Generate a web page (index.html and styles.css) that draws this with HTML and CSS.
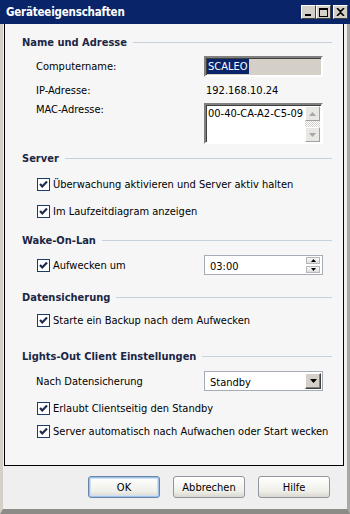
FILE: index.html
```html
<!DOCTYPE html>
<html lang="de">
<head>
    <meta charset="UTF-8">
    <meta name="viewport" content="width=device-width, initial-scale=1.0">
    <title>Geräteeigenschaften</title>
    <link rel="stylesheet" href="styles.css">
</head>
<body>
    <div class="window">
        <div class="titlebar">
            <span class="title">Geräteeigenschaften</span>
            <div class="caption-buttons">
                <span class="cap-btn"><svg width="9" height="9" viewBox="0 0 9 9"><rect x="1" y="6" width="6" height="2" fill="#000"/></svg></span>
                <span class="cap-btn"><svg width="9" height="9" viewBox="0 0 9 9"><rect x="0.5" y="0.5" width="8" height="8" fill="none" stroke="#000"/><rect x="0" y="0" width="9" height="2" fill="#000"/></svg></span>
                <span class="cap-btn close"><svg width="9" height="8" viewBox="0 0 9 8"><path d="M1 0 L4.5 3.5 L8 0 M1 8 L4.5 4.5 L8 8" stroke="#000" stroke-width="1.6" fill="none"/></svg></span>
            </div>
        </div>

        <div class="content">
            <div class="panel">
                <div class="heading h-first"><span>Name und Adresse</span></div>
                <div class="row r-name">
                    <span class="label">Computername:</span>
                    <div class="field readonly"><span class="selected">SCALEO</span></div>
                </div>
                <div class="row r-ip">
                    <span class="label">IP-Adresse:</span>
                    <span class="value">192.168.10.24</span>
                </div>
                <div class="row r-mac">
                    <span class="label">MAC-Adresse:</span>
                    <div class="field memo">
                        <span class="memo-text">00-40-CA-A2-C5-09</span>
                        <div class="scrollbar">
                            <span class="sb-btn"><svg width="7" height="4" viewBox="0 0 7 4"><path d="M0 4 L3.5 0 L7 4 Z" fill="#a7a6aa"/></svg></span>
                            <span class="sb-track"></span>
                            <span class="sb-btn"><svg width="7" height="4" viewBox="0 0 7 4"><path d="M0 0 L3.5 4 L7 0 Z" fill="#a7a6aa"/></svg></span>
                        </div>
                    </div>
                </div>

                <div class="heading h-server"><span>Server</span></div>
                <label class="check c-1"><span class="box"><svg width="13" height="13" viewBox="0 0 13 13"><rect x="0.5" y="0.5" width="12" height="12" fill="#fff" stroke="#1c3b68"/><path d="M3 6 L5.3 8.5 L10 3.5" stroke="#1d2b4f" stroke-width="2.2" fill="none"/></svg></span>Überwachung aktivieren und Server aktiv halten</label>
                <label class="check c-2"><span class="box"><svg width="13" height="13" viewBox="0 0 13 13"><rect x="0.5" y="0.5" width="12" height="12" fill="#fff" stroke="#1c3b68"/><path d="M3 6 L5.3 8.5 L10 3.5" stroke="#1d2b4f" stroke-width="2.2" fill="none"/></svg></span>Im Laufzeitdiagram anzeigen</label>

                <div class="heading h-wake"><span>Wake-On-Lan</span></div>
                <div class="row r-wake">
                    <label class="check label-check"><span class="box"><svg width="13" height="13" viewBox="0 0 13 13"><rect x="0.5" y="0.5" width="12" height="12" fill="#fff" stroke="#1c3b68"/><path d="M3 6 L5.3 8.5 L10 3.5" stroke="#1d2b4f" stroke-width="2.2" fill="none"/></svg></span>Aufwecken um</label>
                    <div class="field flat spin">
                        <span class="field-text">03:00</span>
                        <div class="spin-buttons">
                            <span class="spin-btn"><svg width="5" height="3" viewBox="0 0 5 3"><path d="M0 3 L2.5 0 L5 3 Z" fill="#000"/></svg></span>
                            <span class="spin-btn"><svg width="5" height="3" viewBox="0 0 5 3"><path d="M0 0 L2.5 3 L5 0 Z" fill="#000"/></svg></span>
                        </div>
                    </div>
                </div>

                <div class="heading h-backup"><span>Datensicherung</span></div>
                <label class="check c-backup"><span class="box"><svg width="13" height="13" viewBox="0 0 13 13"><rect x="0.5" y="0.5" width="12" height="12" fill="#fff" stroke="#1c3b68"/><path d="M3 6 L5.3 8.5 L10 3.5" stroke="#1d2b4f" stroke-width="2.2" fill="none"/></svg></span>Starte ein Backup nach dem Aufwecken</label>

                <div class="heading h-lights"><span>Lights-Out Client Einstellungen</span></div>
                <div class="row r-after">
                    <span class="label">Nach Datensicherung</span>
                    <div class="field flat combo">
                        <span class="field-text">Standby</span>
                        <span class="combo-btn"><svg width="7" height="4" viewBox="0 0 7 4"><path d="M0 0 L3.5 4 L7 0 Z" fill="#000"/></svg></span>
                    </div>
                </div>
                <label class="check c-standby"><span class="box"><svg width="13" height="13" viewBox="0 0 13 13"><rect x="0.5" y="0.5" width="12" height="12" fill="#fff" stroke="#1c3b68"/><path d="M3 6 L5.3 8.5 L10 3.5" stroke="#1d2b4f" stroke-width="2.2" fill="none"/></svg></span>Erlaubt Clientseitig den Standby</label>
                <label class="check c-wakeup"><span class="box"><svg width="13" height="13" viewBox="0 0 13 13"><rect x="0.5" y="0.5" width="12" height="12" fill="#fff" stroke="#1c3b68"/><path d="M3 6 L5.3 8.5 L10 3.5" stroke="#1d2b4f" stroke-width="2.2" fill="none"/></svg></span>Server automatisch nach Aufwachen oder Start wecken</label>
            </div>

            <div class="buttons">
                <button class="btn default">OK</button>
                <button class="btn">Abbrechen</button>
                <button class="btn">Hilfe</button>
            </div>
        </div>
    </div>
</body>
</html>
```

FILE: styles.css
```css
body {
    margin: 0;
    padding: 0;
    font-family: "DejaVu Sans Condensed", Tahoma, "DejaVu Sans", sans-serif;
    font-size: 11px;
    color: #000;
    background: #d4d0c8;
}
.window {
    width: 350px;
    height: 514px;
    box-sizing: border-box;
    background: #d4d0c8;
    border-left: 3px solid #d4d0c8;
    border-right: 3px solid #a9a8a4;
    border-bottom: 5px solid #8c8b87;
    display: flex;
    flex-direction: column;
}
.titlebar {
    height: 24px;
    background: #0a246a;
    display: flex;
    align-items: center;
    justify-content: space-between;
    padding: 0 2px 0 3px;
    margin-left: -3px;
    margin-right: -3px;
}
.title {
    color: #fff;
    font-weight: bold;
    font-size: 11.5px;
    letter-spacing: -0.2px;
    padding-left: 3px;
}
.caption-buttons {
    display: flex;
    gap: 0;
}
.cap-btn {
    width: 15px;
    height: 14px;
    box-sizing: border-box;
    background: #d4d0c8;
    border: 1px solid;
    border-color: #fff #404040 #404040 #fff;
    display: flex;
    align-items: center;
    justify-content: center;
}
.cap-btn.close {
    margin-left: 2px;
}
.content {
    flex: 1;
    background: #efefef;
    padding-left: 1px;
    display: flex;
    flex-direction: column;
}
.panel {
    width: 340px;
    height: 442px;
    box-sizing: border-box;
    border: 1px solid #000;
    border-top: none;
    background: #f6f6f6;
    padding: 9px 0 0 17px;
}
.heading {
    height: 18px;
    display: flex;
    align-items: center;
    width: 310px;
    font-weight: bold;
    color: #1b2645;
}
.heading::after {
    content: "";
    flex: 1;
    height: 1px;
    background: #c6d1de;
    margin-left: 6px;
}
.row {
    display: flex;
    align-items: center;
    padding-left: 14px;
}
.label {
    width: 168px;
}
.field {
    width: 119px;
    box-sizing: border-box;
    display: flex;
    align-items: center;
}
.readonly {
    height: 21px;
    background: #d4d0c8;
    border: 2px solid;
    border-color: #808080 #fff #fff #808080;
    box-shadow: inset 1px 1px 0 #404040;
    padding-left: 1px;
}
.selected {
    background: #0a246a;
    color: #fff;
    padding: 0 1px;
    line-height: 15px;
}
.r-name { margin-top: 5px; height: 21px; }
.r-ip { margin-top: 4px; height: 18px; }
.value { padding-left: 2px; }
.r-mac {
    margin-top: 4px;
    height: 41px;
    align-items: flex-start;
}
.r-mac .label { line-height: 14px; }
.memo {
    height: 41px;
    background: #fff;
    border: 2px solid;
    border-color: #808080 #fff #fff #808080;
    box-shadow: inset 1px 1px 0 #404040;
    align-items: stretch;
}
.memo-text {
    flex: 1;
    padding: 2px 0 0 2px;
    line-height: 14px;
}
.scrollbar {
    width: 15px;
    display: flex;
    flex-direction: column;
    margin: 1px 1px 0 0;
}
.sb-btn {
    height: 15px;
    box-sizing: border-box;
    background: #e8e7e4;
    border: 1px solid;
    border-color: #fff #a0a0a0 #a0a0a0 #fff;
    display: flex;
    align-items: center;
    justify-content: center;
}
.sb-track {
    flex: 1;
    background: repeating-conic-gradient(#fff 0 25%, #d4d0c8 0 50%) 0 0 / 2px 2px;
}
.h-server { margin-top: 5px; }
.check {
    display: flex;
    align-items: center;
    height: 18px;
    padding-left: 15px;
}
.box {
    width: 13px;
    height: 13px;
    margin-right: 3px;
    display: flex;
}
.c-1 { margin-top: 8px; }
.c-2 { margin-top: 9px; }
.h-wake { margin-top: 11px; }
.r-wake { margin-top: 6px; height: 20px; }
.label-check {
    width: 168px;
    padding-left: 1px;
    box-sizing: border-box;
}
.flat {
    height: 20px;
    background: #fff;
    border: 1px solid #a5acb5;
}
.field-text {
    flex: 1;
    padding-left: 5px;
    padding-top: 2px;
}
.spin-buttons {
    display: flex;
    flex-direction: column;
    gap: 2px;
    margin-right: 2px;
}
.spin-btn {
    width: 14px;
    height: 7px;
    box-sizing: border-box;
    background: linear-gradient(#fbfbfb, #dcdcdc);
    border: 1px solid #b8b8b8;
    display: flex;
    align-items: center;
    justify-content: center;
}
.h-backup { margin-top: 13px; }
.c-backup { margin-top: 5px; }
.h-lights { margin-top: 18px; }
.r-after { margin-top: 6px; height: 20px; }
.combo-btn {
    width: 16px;
    height: 16px;
    box-sizing: border-box;
    margin-right: 1px;
    background: #d4d0c8;
    border: 1px solid;
    border-color: #fff #404040 #404040 #fff;
    box-shadow: inset -1px -1px 0 #808080;
    display: flex;
    align-items: center;
    justify-content: center;
}
.c-standby { margin-top: 8px; }
.c-wakeup { margin-top: 5px; }
.buttons {
    display: flex;
    justify-content: flex-end;
    gap: 13px;
    margin-top: 10px;
    padding-right: 17px;
}
.btn {
    width: 72px;
    height: 22px;
    font-family: inherit;
    font-size: 11px;
    color: #000;
    background: linear-gradient(#ffffff, #f0f0ea 70%, #d8d8d0);
    border: 1px solid #8f96a0;
    border-radius: 3px;
    padding: 0;
}
.btn.default {
    border-color: #6a84a8;
    box-shadow: inset 0 0 0 1px #9cc2ea, inset 0 0 0 2px #cde0f4;
}
```
